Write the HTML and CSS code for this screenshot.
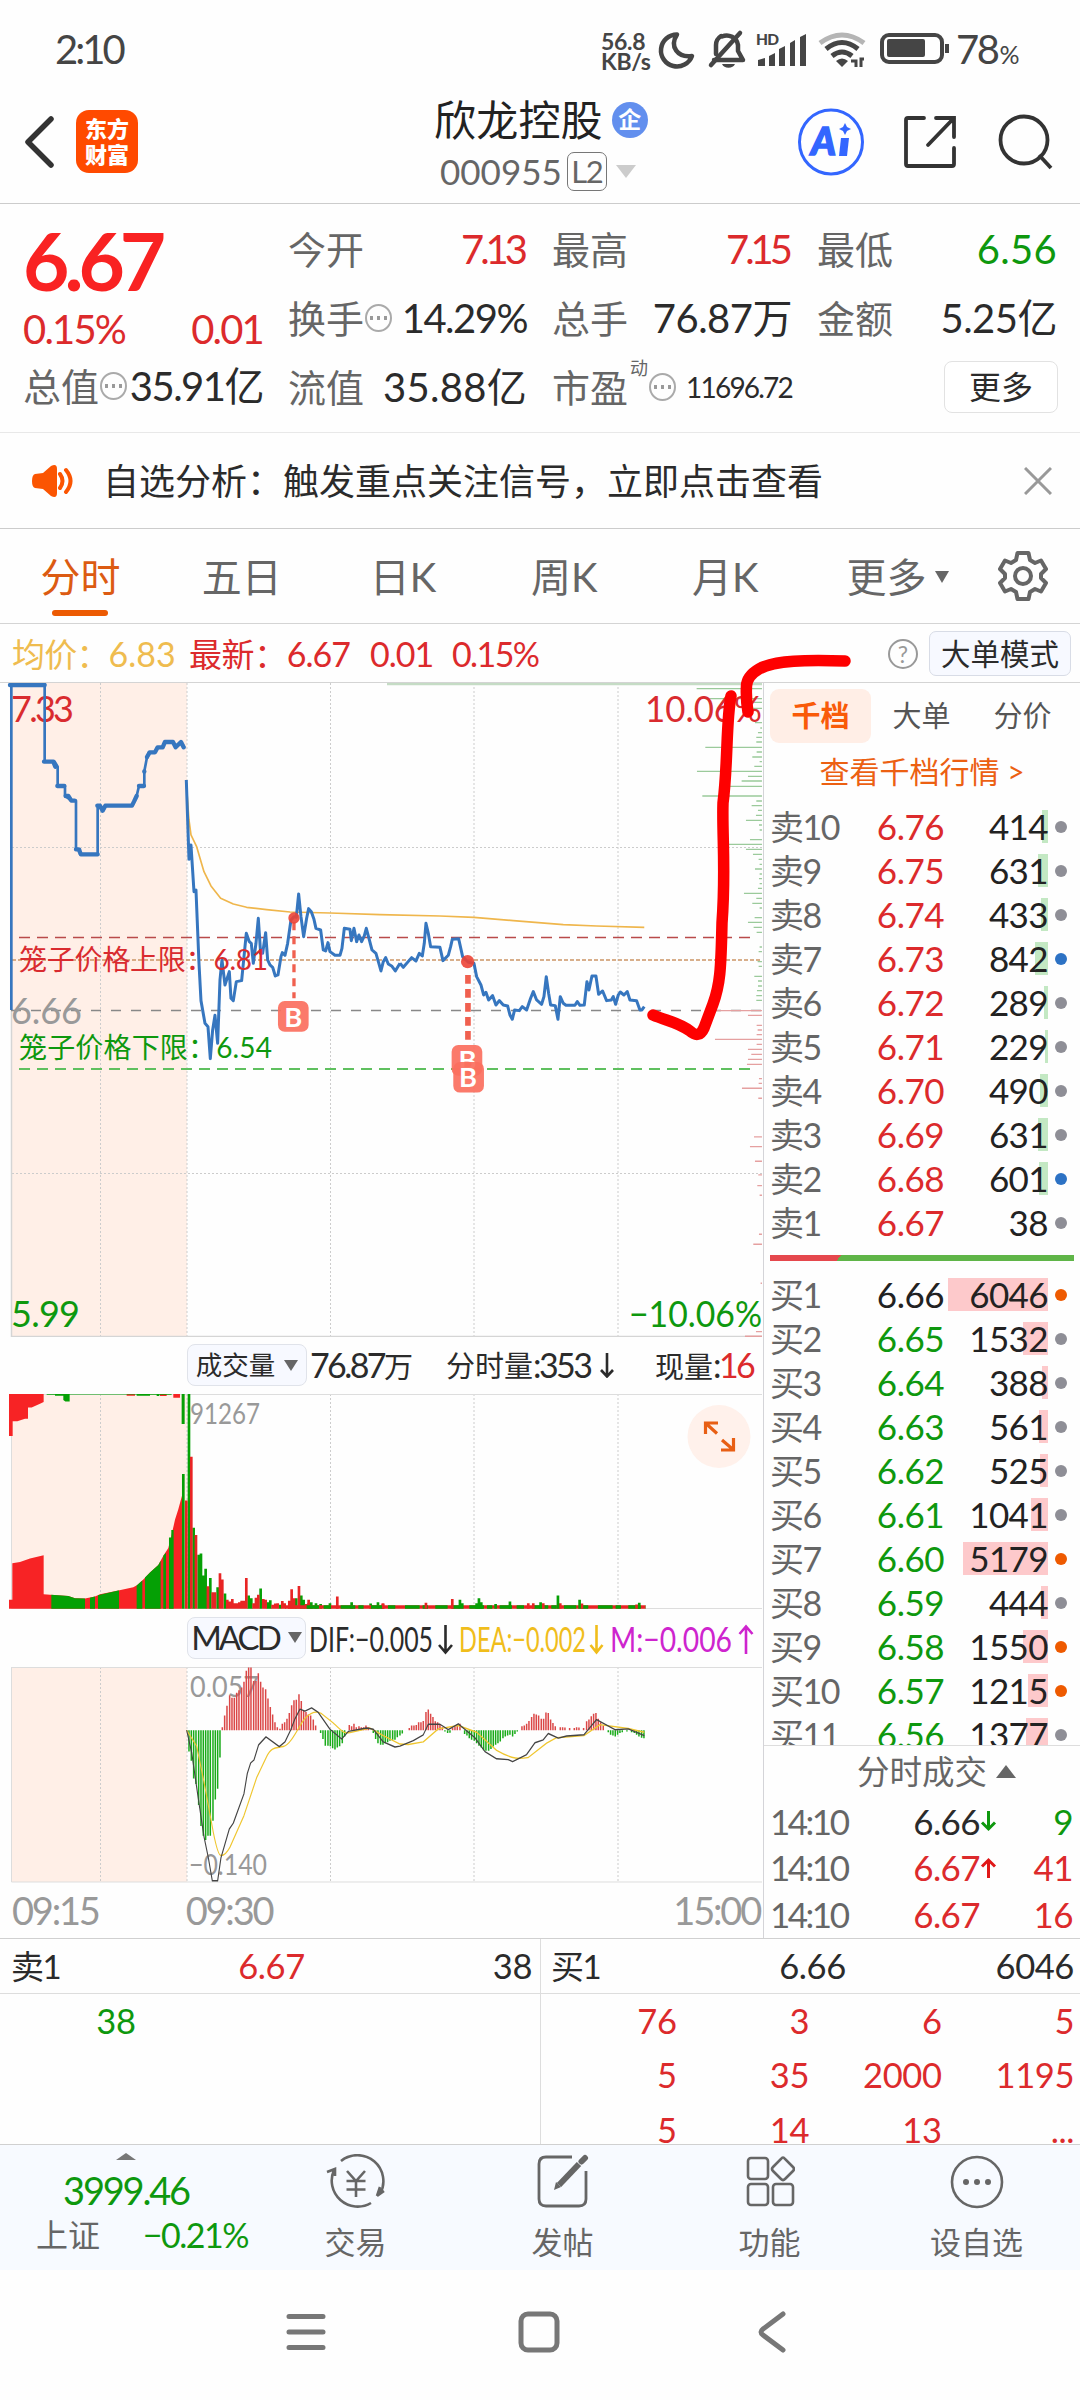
FILE: index.html
```html
<!DOCTYPE html>
<html lang="zh-CN">
<head>
<meta charset="utf-8">
<title>欣龙控股 000955</title>
<link rel="stylesheet" href="styles.css">
</head>
<body>
<div class="screen">

<header class="status">
  <span class="clock">2:10</span>
  <div class="status-right">
    <div class="speed"><span>56.8</span><span>KB/s</span></div>
    <svg class="status-icons" width="304" height="48" viewBox="652 26 304 48">
      <g fill="none" stroke="#454545" stroke-width="4.5" stroke-linecap="round" stroke-linejoin="round">
        <path d="M677 35.500A16 16 0 1 0 692 57C678 59 669 48 677 35.500Z"/>
        <path d="M714 61H743L738 52V46A11.500 11.500 0 0 0 722 37.500M716 55V46C716 42 718 39 721 37"/>
        <path d="M711 66L740 34"/>
      </g>
      <path d="M722 65H735A7 6 0 0 1 722 65Z" fill="#454545"/>
      <g fill="#454545">
        <path d="M758 61L765 59V67H758ZM769 57L775 54V67H769ZM779 50L785 47V67H779ZM790 44L795 41V67H790ZM800 38L806 35V67H800Z"/>
        <text x="756" y="46" font-size="15.500" font-weight="900" textLength="23">HD</text>
      </g>
      <g fill="none" stroke-width="5">
        <path d="M820 44Q842 28 864 44" stroke="#b5b5b5"/>
        <path d="M826 50Q842 37 858 50" stroke="#454545"/>
        <path d="M832 57Q842 49 852 57" stroke="#454545"/>
      </g>
      <path d="M836 62Q842 57 848 62L842 68Z" fill="#454545"/>
      <path d="M851 62H856V68M861 68V60H864" fill="none" stroke="#454545" stroke-width="3"/>
      <rect x="882" y="36" width="60" height="27" rx="7" fill="none" stroke="#454545" stroke-width="4"/>
      <rect x="887" y="40" width="38" height="18" rx="2" fill="#454545"/>
      <path d="M947 45V54" stroke="#454545" stroke-width="4"/>
    </svg>
    <span class="battery">78<small>%</small></span>
  </div>
</header>

<header class="topbar">
  <div class="top-left">
    <svg width="32" height="54" viewBox="0 0 32 54"><path d="M27 4L4 27L27 50" fill="none" stroke="#333" stroke-width="5.500" stroke-linecap="round" stroke-linejoin="round"/></svg>
    <div class="logo"><span>东方</span><span>财富</span></div>
  </div>
  <div class="title">
    <div class="name"><span>欣龙控股</span><i>企</i></div>
    <div class="code"><span>000955</span><b>L2</b><svg width="20" height="13"><path d="M0 0H20L10 13Z" fill="#ccc"/></svg></div>
  </div>
  <div class="top-right">
    <svg width="66" height="68" viewBox="0 0 66 68"><ellipse cx="33" cy="34" rx="31.500" ry="32" fill="none" stroke="#3366ff" stroke-width="3"/><text x="13" y="47" font-size="38" font-weight="900" font-style="italic" fill="#3366ff" stroke="#3366ff" stroke-width="1.500" textLength="26">A</text><path d="M43 30H51L49 48H41Z" fill="#3366ff"/><path d="M47 15L49 19L53 21L49 23L47 27L45 23L41 21L45 19Z" fill="#3366ff"/></svg>
    <svg width="56" height="56" viewBox="0 0 56 56" fill="none" stroke="#333" stroke-width="3.800"><path d="M22 4H6Q4 4 4 6V50Q4 52 6 52H50Q52 52 52 50V34M34 4H52V23M52 4L26 31" stroke-linecap="round"/></svg>
    <svg width="56" height="56" viewBox="0 0 56 56" fill="none" stroke="#333" stroke-width="3.800"><circle cx="27" cy="26" r="23.500"/><path d="M42 41L54 54"/></svg>
  </div>
</header>

<section class="quote">
  <div class="q1"><strong>6.67</strong>
    <div class="pair red"><span>0.15%</span><span>0.01</span></div>
    <div class="pair"><label>总值<i class="more-dot"></i></label><span class="tight">35.91亿</span></div></div>
  <div class="q2">
    <div class="pair"><label>今开</label><span class="red kern">7.13</span></div>
    <div class="pair"><label>换手<i class="more-dot"></i></label><span class="tight">14.29%</span></div>
    <div class="pair"><label>流值</label><span class="wide">35.88亿</span></div></div>
  <div class="q2">
    <div class="pair"><label>最高</label><span class="red kern">7.15</span></div>
    <div class="pair"><label>总手</label><span>76.87万</span></div>
    <div class="pair"><label>市盈<sup>动</sup><i class="more-dot"></i></label><span class="small">11696.72</span></div></div>
  <div class="q2">
    <div class="pair"><label>最低</label><span class="green wide">6.56</span></div>
    <div class="pair"><label>金额</label><span>5.25亿</span></div>
    <div class="pair end"><button>更多</button></div></div>
</section>

<section class="notice">
  <svg width="42" height="36" viewBox="0 0 42 36"><path d="M3 11Q0 12 0 18Q0 24 3 25L11 26L19 33Q25 36 25 30V6Q25 0 19 3L11 10Z" fill="#fb5502"/><path d="M28 11Q33 18 28 25M34 7Q43 18 34 29" fill="none" stroke="#fb5502" stroke-width="4" stroke-linecap="round"/></svg>
  <p>自选分析：触发重点关注信号，立即点击查看</p>
  <svg width="28" height="28" viewBox="0 0 28 28"><path d="M1 1L27 27M27 1L1 27" stroke="#999" stroke-width="3"/></svg>
</section>

<nav class="tabs">
  <a class="on">分时</a><a>五日</a><a>日K</a><a>周K</a><a>月K</a>
  <a class="more">更多<svg width="14" height="12"><path d="M0 0H14L7 12Z" fill="#666"/></svg></a>
  <svg width="50" height="52" viewBox="0 0 50 52" fill="none" stroke="#666" stroke-width="4" stroke-linejoin="round"><path d="M19.500 3H30.500L32 10L37 13L43 10.500L48 19L43 24V28L48 33L43 41.500L37 39L32 42L30.500 49H19.500L18 42L13 39L7 41.500L2 33L7 28V24L2 19L7 10.500L13 13L18 10Z"/><circle cx="25" cy="26" r="8"/></svg>
</nav>

<section class="info">
  <span class="avg">均价：<b>6.83</b></span><span class="last">最新：<b>6.67</b></span><b class="chg">0.01</b><b class="pct">0.15%</b>
  <i class="help">?</i><button>大单模式</button>
</section>

<main class="main">
<section class="charts">
  <svg class="price" width="764" height="654" viewBox="0 0 764 654">
    <rect x="11" y="0" width="176" height="653" fill="#ffefe7"/>
    <g stroke="#ccc" stroke-dasharray="2 2" fill="none"><path d="M100.500 0V653M187 0V653M330.500 0V653M474 0V653M618 0V653M12 164.500H762M12 490.500H762"/></g>
    <path d="M11.500 0V653.500H762" fill="none" stroke="#d5d5d5" stroke-width="1.500"/>
    <path d="M19 254.500H750" stroke="#b94a4a" stroke-width="1.500" stroke-dasharray="11 7"/>
    <path d="M12 277H762" stroke="#cc9566" stroke-width="1.500" stroke-dasharray="4 2"/>
    <path d="M11 327.500H762" stroke="#888" stroke-width="1.500" stroke-dasharray="10 10"/>
    <path d="M19 386H750" stroke="#5fc05f" stroke-width="1.800" stroke-dasharray="11 7"/>
    <path d="M387 .8H762" stroke="#c5dcc5" stroke-width="3"/>
    <g transform="translate(380 -13) scale(.3333)" fill="none" stroke-width="4">
      <path stroke="#9bca9b" d="M950 56H1146M975 86H1146M1090 97H1146M1095 115H1146M1125 158H1146M1141 174H1146M1134 188H1146M1129 202H1146M1129 216H1146M976 232H1146M1130 246H1146M1117 261H1146M1139 275H1146M1123 289H1146M951 304H1146M1104 319H1146M1085 333H1146M1045 349H1146M967 378H1146M1129 393H1146M1115 407H1146M1134 421H1146M1128 436H1146M1098 451H1146M1137 465H1146M1139 480H1146M1110 509H1146M1040 523H1146M1098 538H1146M1119 553H1146M1136 568H1146M1139 583H1146M1125 597H1146M1139 612H1146M1137 626H1146M1139 641H1146M1134 655H1146M1092 670H1146M1129 685H1146M1117 700H1146M1139 714H1146M1124 743H1146M1104 757H1146M1121 772H1146M1130 787H1146M1139 831H1146M1136 845H1146M1133 875H1146M1136 889H1146M1123 919H1146M1134 933H1146M1134 948H1146M1131 962H1146M1129 977H1146M1129 991H1146"/>
      <path stroke="#e5a0a0" d="M1010 1022H1146M1104 1036H1146M1130 1066H1146M1133 1080H1146M1130 1094H1146M1005 1108H1146M1130 1123H1146M1104 1138H1146M1114 1153H1146M1104 1168H1146M1101 1183H1146M1137 1226H1146M1136 1240H1146M1086 1255H1146M1135 1285H1146M1122 1401H1146M1110 1430H1146M1125 1474H1146M1135 1515H1146M1132 1547H1146M1139 1576H1146M1137 1693H1146M1120 1723H1146M1142 1840H1146M1128 1985H1146M1095 1999H1146"/>
    </g>
    <g font-size="36">
      <text x="11" y="38.500" fill="#d92b2f" textLength="63">7.33</text><text x="645" y="38.500" fill="#d92b2f" textLength="117" lengthAdjust="spacingAndGlyphs">10.06%</text>
      <text x="11" y="340.500" fill="#999" textLength="71">6.66</text>
      <text x="11" y="644" fill="#0e980e" textLength="69">5.99</text><text x="629" y="644" fill="#0e980e" textLength="133" lengthAdjust="spacingAndGlyphs">−10.06%</text>
    </g>
    <g transform="translate(0 -13) scale(.3333)" fill="none" stroke-linejoin="round">
      <g stroke="#3676bf">
        <path stroke-width="8" d="M34 1020V44H134V275H164L173 290V348H195V378L215 392H228V538H240V553H293V407L308 420L318 407H396L410 378L417 348H433V304L441 262L447 247H465L472 232H488L494 216H520L527 232L543 216L553 232"/>
        <path stroke-width="13" stroke-linecap="round" d="M30 45H134M132 275H160L166 290M172 348H193M197 378H205L214 392H224M228 538H236L243 553H293M292 407H300L308 422L316 407H396L402 395L410 378M417 348H432M433 304V305M441 262V261L449 247H465L473 232H488L495 216H519L527 232L543 216L551 232"/>
      </g>
      <path stroke="#efb64c" stroke-width="5" d="M559 340L567 450 573 495 590 530 612 605 633 648 662 685 700 702 740 712 800 719 870 726 990 729 1140 734 1320 738 1422 742 1540 752 1690 764 1790 768 1933 772"/>
      <path stroke="#3676bf" stroke-width="9" d="M559 330L567 568 573 525 582 665 588 660 597 880 603 992 615 1060 624 1070 631 1166 638 1080 645 1036 653 1120 660 930 666 870 675 945 688 905 693 985 700 992 709 935 725 932 733 850 739 790 748 815 754 820 760 880 768 820 775 745 782 850 788 850 797 788 803 870 810 885 818 892 826 918 834 915 843 860 847 848 855 856 863 820 873 750 882 740 889 742 896 672 903 740 911 800 920 745 926 716 934 725 942 748 948 775 962 780 970 840 977 843 984 818 990 845 1005 856 1020 856 1026 835 1033 775 1050 778 1054 812 1062 775 1070 815 1077 795 1085 815 1093 798 1099 775 1107 805 1116 840 1128 850 1136 878 1143 903 1150 875 1157 863 1165 882 1175 888 1186 903 1200 880"/>
      <path transform="translate(1140 0)" stroke="#3676bf" stroke-width="9" d="M60 880L70 892 95 863 108 873 118 850 127 858 133 820 138 760 145 790 152 830 180 832 189 872 205 856 212 830 217 808 236 806 248 860 265 877 282 880 290 920 303 945 311 975 318 967 326 990 338 977 348 1005 358 992 370 1005 383 1008 390 1035 397 1048 404 1020 418 1022 427 1010 440 1020 452 985 460 965 470 990 485 1003 492 980 499 920 506 970 512 1005 526 1007 534 1048 541 980 550 1000 558 1006 585 1006 592 995 600 1006 613 1005 621 935 627 960 636 918 648 918 656 973 668 963 680 992 694 990 700 980 707 1003 715 975 721 966 732 975 742 965 750 990 770 992 780 1020 786 1020 793 1010"/>
      <g stroke="#f0604f"><path d="M882 757V985" stroke-width="10" stroke-dasharray="24 18"/><path d="M1404 915V1125" stroke-width="17" stroke-dasharray="26 16"/></g>
      <g fill="#ec4436" fill-opacity=".9"><circle cx="882" cy="744" r="17"/><circle cx="1403" cy="875" r="20"/></g>
      <g fill="#fb6f5e" fill-opacity=".92"><rect x="834" y="993" width="92" height="92" rx="20"/><rect x="1355" y="1125" width="92" height="92" rx="20"/></g>
      <text x="1403" y="1200" class="mark">B</text>
      <rect x="1360" y="1176" width="92" height="92" rx="20" fill="#fb6f5e" fill-opacity=".92"/>
      <text x="880" y="1070" class="mark">B</text><text x="1404" y="1252" class="mark">B</text>
    </g>
    <text x="19" y="287" font-size="28" fill="#d92b2f" textLength="249">笼子价格上限：6.81</text>
    <text x="19" y="375" font-size="28" fill="#0e980e" textLength="253">笼子价格下限：6.54</text>
  </svg>

  <div class="ind vol-head">
    <button>成交量<svg width="14" height="11"><path d="M0 0H14L7 11Z" fill="#666"/></svg></button>
    <span class="n1"><b>76.87</b>万</span><span class="n2">分时量<b>:353</b><svg width="14" height="26" viewBox="0 0 14 26"><path d="M7 1V24M1 18L7 24.500L13 18" fill="none" stroke="#2b2b2b" stroke-width="2.600"/></svg></span><span class="n3">现量<b>:<em>16</em></b></span>
  </div>
  <svg class="volume" width="764" height="215" viewBox="0 0 764 215">
    <rect x="11" y="0" width="176" height="214" fill="#ffefe7"/>
    <path d="M100.500 0V214M187 0V214M330.500 0V214M474 0V214M618 0V214" stroke="#ccc" stroke-dasharray="2 2"/>
    <path d="M11 .5H762M11.500 0V214.500H762" fill="none" stroke="#ddd"/>
    <g transform="scale(.3333 .4209) translate(0 -271)" fill="#f72325">
      <path d="M27 271V371H38V336H52L75 330H84V303H95L120 294L131 290V271ZM380 271H405V275H380ZM480 271H500V276H480ZM520 271H540V280H520Z"/>
      <path fill="#05a005" d="M140 271V273H165V275H190V285L196 289H209V272H410V275H450V273H470V276H478V273H515V271ZM545 271H554V342H545Z"/>
      <path d="M27 781V760H37V673L60 670L90 662L131 654V747L150 748L205 751 225 756 255 757 285 752 300 747 355 738 400 730 412 725 430 712 450 695 475 677 490 655 505 637 515 605 525 570 535 545 546 513V781Z"/>
      <path fill="#05a005" d="M154 781V748L205 751 225 756 255 757V781ZM270 781V755L285 752V781ZM294 781V749L355 738H357V781ZM410 781V726L427 714V781ZM435 781V707L450 695 475 677 482 667V781ZM490 781V655L498 648V781ZM507 781V612H514V594H521V781Z"/>
    </g>
    <g transform="scale(.3333 .4209) translate(0 -271)" fill="none" stroke-width="8">
      <path stroke="#05a005" d="M550 781V461M567 781V271M581 781V589M596 781V653M603 781V650M610 781V702M617 781V686M631 781V708M653 781V730M675 781V745M746 781V750M754 781V756M782 781V733M804 781V766M811 781V761M840 781V772M889 781V756M904 781V750M911 781V760M926 781V768M934 781V766M948 781V768M962 781V770M990 781V768M1055 781V766M1112 781V769M1134 781V766"/>
      <path stroke="#e82424" d="M559 781V524M574 781V420M588 781V606M624 781V728M638 781V742M645 781V742M660 781V697M667 781V712M682 781V760M689 781V764M697 781V758M704 781V768M711 781V768M718 781V766M725 781V762M732 781V762M739 781V708M761 781V768M768 781V755M775 781V748M790 781V758M797 781V760M818 781V772M826 781V769M833 781V768M847 781V763M854 781V768M868 781V762M875 781V735M882 781V756M897 781V727M918 781V770M926 781V760M1012 781V752M1148 781V769"/>
      <path stroke="#e82424" d="M855 777H1937"/><path stroke="#05a005" d="M920 777H1937" stroke-dasharray="37 14 22 29 44 9 16 22"/>
      <g transform="translate(1140 0)"><path stroke="#e82424" d="M10 781V769M138 781V767M217 781V758M445 781V768M460 781V768M490 781V768M541 781V768M606 781V769M770 781V771"/><path stroke="#05a005" d="M240 781V760M247 781V768M290 781V768M297 781V756M304 781V766M347 781V770M390 781V764M482 781V766M534 781V750M599 781V760M778 781V767"/></g>
    </g>
    <text x="190" y="30" font-size="28" fill="#999" textLength="70" lengthAdjust="spacingAndGlyphs">91267</text>
    <circle cx="719" cy="42.500" r="31.500" fill="#fff1eb"/>
    <path d="M705.500 40V29H718M706 29.500L717 39.500M733.500 44V56H721M733 55.500L722 46" fill="none" stroke="#e85f14" stroke-width="3.200"/>
  </svg>

  <div class="ind macd-head">
    <button><b>MACD</b><svg width="14" height="11"><path d="M0 0H14L7 11Z" fill="#666"/></svg></button>
    <svg width="457" height="56" viewBox="307 0 457 56" font-size="35">
      <text x="310" y="42" fill="#2b2b2b" textLength="124" lengthAdjust="spacingAndGlyphs">DIF:−0.005</text>
      <text x="460" y="42" fill="#f0bd1b" textLength="127" lengthAdjust="spacingAndGlyphs">DEA:−0.002</text>
      <text x="611" y="42" fill="#ce24ce" textLength="122" lengthAdjust="spacingAndGlyphs">M:−0.006</text>
      <g fill="none" stroke-width="2.600"><path stroke="#2b2b2b" d="M446.500 15V42M440 35L446.500 42.500L453 35"/><path stroke="#f0bd1b" d="M597.500 15V42M591.500 35L597.500 42.500L603.500 35"/><path stroke="#ce24ce" d="M747 44V17M740.500 24L747 16.500L753.500 24"/></g>
    </svg>
  </div>
  <svg class="macd" width="764" height="216" viewBox="0 0 764 216">
    <rect x="11" y="0" width="176" height="215" fill="#ffefe7"/>
    <path d="M100.500 0V215M187 0V215M330.500 0V215M474 0V215M618 0V215" stroke="#ccc" stroke-dasharray="2 2"/>
    <path d="M11 .5H762M11.500 0V215H762" fill="none" stroke="#ddd"/>
    <text x="190" y="30" font-size="28" fill="#999" textLength="69" lengthAdjust="spacingAndGlyphs">0.057</text>
    <text x="189" y="208" font-size="28" fill="#999" textLength="78" lengthAdjust="spacingAndGlyphs">−0.140</text>
    <g transform="scale(.3333 .4209) translate(0 -917)" fill="none" stroke-width="4.500">
      <path stroke="#19ab19" d="M567 1067V1118M574 1067V1140M581 1067V1182M588 1067V1195M596 1067V1245M603 1067V1295M610 1067V1318M617 1067V1328M624 1067V1318M631 1067V1318M639 1067V1282M646 1067V1232M653 1067V1206M660 1067V1132M962 1067V1074M969 1067V1088M976 1067V1104M984 1067V1104M991 1067V1105M998 1067V1110M1005 1067V1113M1012 1067V1108M1019 1067V1105M1027 1067V1098M1034 1067V1082M1120 1067V1074M1127 1067V1088M1134 1067V1098M1142 1067V1102M1149 1067V1102M1156 1067V1098M1163 1067V1096M1170 1067V1092M1178 1067V1090M1185 1067V1090M1192 1067V1084M1200 1067V1080M1207 1067V1075"/>
      <path stroke="#db4747" d="M667 1067V1060M674 1067V1032M681 1067V1009M689 1067V984M696 1067V990M703 1067V990M710 1067V978M717 1067V972M725 1067V966M732 1067V952M739 1067V926M746 1067V918M753 1067V918M761 1067V950M768 1067V950M775 1067V932M782 1067V952M789 1067V966M797 1067V970M804 1067V992M811 1067V1012M818 1067V1030M825 1067V1048M832 1067V1060M840 1067V1064M847 1067V1052M854 1067V1048M861 1067V1040M868 1067V1026M875 1067V1008M882 1067V996M889 1067V995M897 1067V982M904 1067V998M911 1067V1020M918 1067V1024M925 1067V1030M932 1067V1032M940 1067V1042M947 1067V1056M1048 1067V1055M1055 1067V1058M1062 1067V1052M1069 1067V1060M1077 1067V1058M1084 1067V1060M1091 1067V1060M1098 1067V1056M1105 1067V1060"/>
      <g transform="translate(1140 0)">
        <path stroke="#19ab19" d="M195 1067V1070M203 1067V1074M210 1067V1073M254 1067V1076M261 1067V1080M268 1067V1086M275 1067V1090M283 1067V1092M290 1067V1098M297 1067V1104M304 1067V1108M311 1067V1115M318 1067V1116M326 1067V1116M333 1067V1112M340 1067V1106M347 1067V1102M354 1067V1098M361 1067V1094M369 1067V1086M376 1067V1082M383 1067V1080M390 1067V1078M398 1067V1082M405 1067V1076M412 1067V1070M685 1067V1072M692 1067V1078M699 1067V1080M706 1067V1082M713 1067V1078M720 1067V1074M727 1067V1072M741 1067V1070M755 1067V1072M763 1067V1074M770 1067V1078M777 1067V1082M785 1067V1085M792 1067V1086"/>
        <path stroke="#db4747" d="M88 1067V1062M95 1067V1056M102 1067V1056M109 1067V1055M116 1067V1048M123 1067V1048M130 1067V1045M138 1067V1024M145 1067V1018M152 1067V1028M159 1067V1036M166 1067V1046M173 1067V1048M180 1067V1054M187 1067V1060M218 1067V1062M225 1067V1058M232 1067V1053M240 1067V1052M426 1067V1058M433 1067V1056M440 1067V1052M447 1067V1045M455 1067V1036M462 1067V1028M469 1067V1030M476 1067V1032M484 1067V1040M491 1067V1040M498 1067V1025M505 1067V1026M512 1067V1042M519 1067V1050M526 1067V1058M541 1067V1060M548 1067V1060M555 1067V1061M569 1067V1062M583 1067V1062M590 1067V1060M597 1067V1061M611 1067V1062M620 1067V1046M627 1067V1042M634 1067V1034M641 1067V1028M648 1067V1026M655 1067V1040M662 1067V1048M670 1067V1056"/>
      </g>
      <g stroke-width="3.300" stroke-linejoin="round">
        <path stroke="#efc62f" d="M560 1067L590 1105 612 1190 640 1310C650 1350 657 1365 663 1365S680 1360 690 1345L732 1270 770 1180 800 1130C815 1105 830 1110 850 1106S890 1070 905 1050 945 1018 965 1028L1000 1050C1030 1073 1030 1074 1050 1073L1110 1062 1150 1080 1200 1100 1225 1101 1270 1095 1315 1064 1375 1056 1430 1072 1490 1115C1540 1138 1560 1135 1585 1132L1640 1098 1670 1085 1752 1080 1800 1054 1885 1063 1933 1072"/>
        <path stroke="#444" d="M560 1067L575 1120 595 1230 612 1320 625 1370 637 1425 653 1425 663 1370 688 1302 700 1288 732 1218 742 1170 752 1145 762 1138 776 1102 798 1083 838 1106 855 1095 873 1065 885 1040 900 1017 915 1022 935 1014 955 1025 990 1065 1025 1088 1045 1070 1100 1062 1120 1065 1150 1095 1185 1107 1200 1105 1240 1092 1270 1078 1285 1053 1320 1053 1345 1066 1375 1052 1425 1085 1455 1118 1490 1135 1525 1137 1538 1142 1580 1125 1605 1097 1630 1090 1645 1075 1675 1086 1700 1081 1752 1078 1790 1042 1845 1066 1885 1064 1933 1080"/>
      </g>
    </g>
  </svg>
  <div class="axis"><span>09:15</span><span>09:30</span><span>15:00</span></div>
</section>

<aside class="book">
  <div class="book-tabs"><a class="on">千档</a><a>大单</a><a>分价</a></div>
  <a class="book-link">查看千档行情 &gt;</a>
  <div class="sell">
    <div class="row"><span>卖10</span><b>6.76</b><u><i style="width:6px"></i>414</u><s></s></div>
    <div class="row"><span>卖9</span><b>6.75</b><u><i style="width:10px"></i>631</u><s></s></div>
    <div class="row"><span>卖8</span><b>6.74</b><u><i style="width:7px"></i>433</u><s></s></div>
    <div class="row"><span>卖7</span><b>6.73</b><u><i style="width:13px"></i>842</u><s class="blue"></s></div>
    <div class="row"><span>卖6</span><b>6.72</b><u><i style="width:4px"></i>289</u><s></s></div>
    <div class="row"><span>卖5</span><b>6.71</b><u><i style="width:3px"></i>229</u><s></s></div>
    <div class="row"><span>卖4</span><b>6.70</b><u><i style="width:8px"></i>490</u><s></s></div>
    <div class="row"><span>卖3</span><b>6.69</b><u><i style="width:10px"></i>631</u><s></s></div>
    <div class="row"><span>卖2</span><b>6.68</b><u><i style="width:9px"></i>601</u><s class="blue"></s></div>
    <div class="row"><span>卖1</span><b>6.67</b><u>38</u><s></s></div>
  </div>
  <div class="ratio"></div>
  <div class="buy">
    <div class="row"><span>买1</span><b class="flat">6.66</b><u><i style="width:100px"></i>6046</u><s class="hot"></s></div>
    <div class="row"><span>买2</span><b>6.65</b><u><i style="width:25px"></i>1532</u><s></s></div>
    <div class="row"><span>买3</span><b>6.64</b><u><i style="width:6px"></i>388</u><s></s></div>
    <div class="row"><span>买4</span><b>6.63</b><u><i style="width:9px"></i>561</u><s></s></div>
    <div class="row"><span>买5</span><b>6.62</b><u><i style="width:8px"></i>525</u><s></s></div>
    <div class="row"><span>买6</span><b>6.61</b><u><i style="width:17px"></i>1041</u><s></s></div>
    <div class="row"><span>买7</span><b>6.60</b><u><i style="width:85px"></i>5179</u><s class="hot"></s></div>
    <div class="row"><span>买8</span><b>6.59</b><u><i style="width:7px"></i>444</u><s></s></div>
    <div class="row"><span>买9</span><b>6.58</b><u><i style="width:25px"></i>1550</u><s class="hot"></s></div>
    <div class="row"><span>买10</span><b>6.57</b><u><i style="width:20px"></i>1215</u><s class="hot"></s></div>
    <div class="row"><span>买11</span><b>6.56</b><u><i style="width:22px"></i>1377</u><s></s></div>
  </div>
  <div class="deal-head">分时成交<svg width="20" height="13"><path d="M0 13H20L10 0Z" fill="#666"/></svg></div>
  <div class="deal"><span>14:10</span><b>6.66</b><svg width="17" height="22" viewBox="0 0 17 22"><path d="M8.500 1V19M2 12.500L8.500 19L15 12.500" fill="none" stroke="#0e980e" stroke-width="3"/></svg><em class="green">9</em></div>
  <div class="deal"><span>14:10</span><b class="red">6.67</b><svg width="17" height="22" viewBox="0 0 17 22"><path d="M8.500 21V3M2 9.500L8.500 3L15 9.500" fill="none" stroke="#e01818" stroke-width="3"/></svg><em class="red">41</em></div>
  <div class="deal"><span>14:10</span><b class="red">6.67</b><svg width="17" height="22"></svg><em class="red">16</em></div>
</aside>

<svg class="scribble" width="216" height="410" viewBox="0 0 216 410"><g fill="none" stroke="#fe0000" stroke-width="11.500" stroke-linecap="round" stroke-linejoin="round"><path d="M203 21C165 20 133 20 117 29Q105 36 104.500 46C104 55 105 66 106 72"/><path d="M89 56C84 80 86 125 81 163C80 195 84 230 80 283C79 330 78 345 71 364L62 388Q57 399 48 391C36 382 25 381 11 375"/></g></svg>
</main>

<section class="queues">
  <div class="queue"><header><span>卖1</span><b class="red">6.67</b><em>38</em></header>
    <div class="cells green"><span>38</span></div></div>
  <div class="queue"><header><span>买1</span><b>6.66</b><em>6046</em></header>
    <div class="cells red"><span>76</span><span>3</span><span>6</span><span>5</span><span>5</span><span>35</span><span>2000</span><span>1195</span><span>5</span><span>14</span><span>13</span><span>...</span></div></div>
</section>

<footer class="actions">
  <div class="index"><svg width="20" height="7"><path d="M0 7H20L10 0Z" fill="#777"/></svg><strong>3999.46</strong><div><span>上证</span><b>−0.21%</b></div></div>
  <a><svg width="60" height="56" viewBox="0 0 60 56" fill="none" stroke="#666" stroke-width="2.600"><path d="M15 7A26 26 0 0 1 54 40M45 49A26 26 0 0 1 8 16M1 18L9 15V22M51 42L58 37M51 42L54 33"/><path d="M21 17L30 27L39 17M30 26V43M20.500 27H39.500M20.500 35.500H39.500"/></svg>交易</a>
  <a><svg width="54" height="56" viewBox="0 0 54 56" fill="none" stroke="#666" stroke-width="2.800"><path d="M36 3H10Q3 3 3 10V45Q3 52 10 52H43Q50 52 50 45V17"/><path d="M23 31L43 10" stroke-width="6"/><path d="M45.500 7.500L49 4" stroke-width="6" stroke-linecap="round"/><path d="M18 36L20 28L25 33Z" fill="#666" stroke="none"/></svg>发帖</a>
  <a><svg width="50" height="56" viewBox="0 0 50 56" fill="none" stroke="#666" stroke-width="2.600"><rect x="3" y="4" width="20" height="21" rx="3"/><rect x="3" y="30" width="20" height="21" rx="3"/><rect x="28" y="30" width="20" height="21" rx="3"/><path d="M36 5Q38 2 40 5L48 13Q50 15 48 17L40 25Q38 27 36 25L28 17Q26 15 28 13Z"/></svg>功能</a>
  <a><svg width="54" height="56" viewBox="0 0 54 56"><circle cx="27" cy="28" r="25" fill="none" stroke="#666" stroke-width="2.600"/><g fill="#666"><circle cx="16" cy="28" r="3"/><circle cx="27" cy="28" r="3"/><circle cx="38" cy="28" r="3"/></g></svg>设自选</a>
</footer>

<nav class="system">
  <svg width="40" height="44" viewBox="0 0 40 44"><path d="M3 6.500H37M3 22H37M3 37.500H37" stroke="#777" stroke-width="5" stroke-linecap="round"/></svg>
  <svg width="44" height="44" viewBox="0 0 44 44"><rect x="4" y="4" width="36" height="36" rx="7" fill="none" stroke="#777" stroke-width="5"/></svg>
  <svg width="30" height="44" viewBox="0 0 30 44"><path d="M26 4L6 19Q2 22 6 25L26 40" fill="none" stroke="#777" stroke-width="5" stroke-linecap="round"/></svg>
</nav>
</div>
</body>
</html>
```
FILE: styles.css
```css
* { box-sizing: border-box; }
body { margin: 0; background: #fefefe; font-family: Lato, "Noto Sans CJK SC", sans-serif; color: #2b2b2b; line-height: 1; }
b, em, i, u, s { font-weight: 400; font-style: normal; text-decoration: none; }
svg { display: block; flex: none; }
button { font: inherit; color: inherit; padding: 0; margin: 0; }
.screen { width: 1080px; height: 2400px; overflow: hidden; display: flex; flex-direction: column; background: #fefefe; white-space: nowrap; }
.red { color: #dc2a2c; }
.green { color: #0e980e; }

.status { height: 98px; padding: 0 61px 0 55px; display: flex; justify-content: space-between; align-items: center; color: #454545; }
.clock { font-size: 40px; letter-spacing: -3px; }
.status-right { display: flex; align-items: center; }
.speed { display: flex; flex-direction: column; font-weight: 700; font-size: 23px; line-height: 20px; width: 51px; margin-top: 6px; letter-spacing: -.3px; }
.speed span { height: 20px; line-height: 18px; }
.battery { font-size: 40px; letter-spacing: -2.500px; width: 63px; }
.battery small { font-size: 25px; margin-left: 2px; }

.topbar { height: 106px; border-bottom: 1px solid #ccc; padding: 0 27px 0 24px; display: grid; grid-template-columns: 300px 1fr 300px; }
.top-left { display: flex; align-items: center; gap: 20px; height: 88px; }
.logo { width: 62px; height: 63px; border-radius: 13px; background: #ff4a00; color: #fff; display: flex; flex-direction: column; align-items: center; justify-content: center; font-size: 22px; line-height: 26px; font-weight: 900; }
.title { padding-left: 110px; }
.name { display: flex; align-items: center; font-size: 42px; height: 44px; gap: 9px; color: #222; letter-spacing: .2px; }
.name i { width: 36px; height: 36px; border-radius: 50%; background: #628fee; color: #fff; font-size: 23px; line-height: 35px; text-align: center; font-weight: 700; }
.code { display: flex; align-items: center; height: 38px; margin-top: 11px; margin-left: 6px; font-size: 35px; color: #666; }
.code b { width: 40px; height: 39px; border: 1.500px solid #777; border-radius: 7px; font-size: 31px; line-height: 36px; text-align: center; letter-spacing: -1.500px; margin: 0 9px 0 5px; }
.top-right { display: flex; align-items: center; justify-content: flex-end; height: 88px; gap: 37px; }
.top-right svg:first-child { margin-right: 1px; }
.top-right svg:last-child { margin-left: 2px; }

.quote { height: 230px; border-bottom: 1px solid #e8e8e8; padding: 11px 22px 0 23px; display: grid; grid-template-columns: 240px 239px 240px 240px; column-gap: 25px; font-size: 40px; }
.quote strong { display: block; height: 91px; line-height: 91px; font-size: 80px; letter-spacing: -5px; color: #f92222; font-weight: 700; }
.q1 .pair.red { height: 46px; }
.q1 .pair.red span { letter-spacing: -1.800px; }
.pair { height: 69px; display: flex; justify-content: space-between; align-items: center; }
.pair span { letter-spacing: -.5px; }
.pair .tight { letter-spacing: -1.500px; }
.pair .wide { letter-spacing: .3px; }
.pair .kern { letter-spacing: -4px; margin-right: 3px; }
.pair .small { font-size: 28px; letter-spacing: -1.800px; }
.pair label { font-size: 38px; color: #666; display: flex; align-items: center; }
.more-dot { width: 27px; height: 28px; border: 2px solid #aaa; border-radius: 50%; margin-left: 1px; background: radial-gradient(circle 2px, #999 90%, transparent) 0 50% / 7px 100% repeat-x content-box; padding: 0 1px; }
.quote sup { font-size: 18px; align-self: flex-start; margin-top: -9px; margin-left: 2px; }
.pair.end { justify-content: flex-end; }
.quote button { width: 114px; height: 52px; border: 1.500px solid #e2e2e2; border-radius: 8px; background: #fff; font-size: 32px; margin-right: -1px; }

.notice { height: 96px; border-bottom: 1px solid #ccc; display: flex; align-items: center; padding: 0 28px 0 32px; font-size: 36px; }
.notice p { flex: 1; margin: 1px 0 0 29px; }

.tabs { height: 95px; border-bottom: 1px solid #d4d4d4; display: flex; align-items: center; font-size: 40px; color: #666; padding-right: 32px; }
.tabs a { width: 161.200px; height: 94px; display: flex; align-items: center; justify-content: center; position: relative; padding-top: 2px; }
.tabs .on { color: #dc5b12; }
.tabs .on::after { content: ""; position: absolute; left: 52px; bottom: 7px; width: 56px; height: 6px; border-radius: 3px; background: #ec5a02; }
.tabs .more { flex: 1; gap: 9px; margin-right: 8px; }

.info { height: 59px; border-bottom: 1px solid #d4d4d4; display: flex; align-items: center; padding: 2px 9px 0 12px; font-size: 33px; color: #dc2a2c; }
.info b { font-size: 34px; letter-spacing: -1px; }
.info .avg { width: 177px; color: #efbc4f; letter-spacing: -.8px; }
.info .avg b { letter-spacing: 0; }
.info .last { width: 181px; letter-spacing: -.4px; }
.info .chg { width: 82px; }
.info .pct { flex: 1; letter-spacing: -1.600px; }
.help { width: 30px; height: 30px; border: 2px solid #999; border-radius: 50%; font-size: 23px; line-height: 26px; text-align: center; color: #999; margin-right: 11px; }
.info button { width: 142px; height: 45px; border: 1.500px solid #d8dce6; border-radius: 7px; background: #f7f9ff; color: #2b2b2b; font-size: 29.500px; }

.main { height: 1256px; display: flex; border-bottom: 1px solid #d0d0d0; position: relative; }
.charts { width: 764px; border-right: 1px solid #d4d4d8; }
.mark { fill: #fff; font-size: 82px; font-weight: 700; text-anchor: middle; }
.ind { height: 57px; display: flex; align-items: center; padding-left: 187px; font-size: 29px; }
.ind button { width: 120px; height: 42px; border: 1px solid #e0e3ea; border-radius: 8px; background: #f7f9ff; font-size: 26.500px; display: flex; align-items: center; justify-content: center; gap: 9px; }
.vol-head b { font-size: 34px; letter-spacing: -2.600px; }
.n1 { width: 137px; padding-left: 3px; }
.n2 { width: 211px; padding-left: 2px; display: flex; align-items: center; }
.n2 svg { margin-left: 10px; }
.n3 em { color: #dc2a2c; }
.macd-head { height: 58px; }
.macd-head button b { font-size: 33px; letter-spacing: -3px; }
.axis { height: 56px; display: flex; align-items: center; color: #999; font-size: 38px; padding: 0 3px 2px 12px; letter-spacing: -2.200px; }
.axis span:nth-child(2) { margin-left: 87px; flex: 1; }

.book { width: 316px; display: flex; flex-direction: column; }
.book-tabs { display: flex; height: 54px; margin: 6px 0 0 6px; font-size: 29px; color: #555; }
.book-tabs a { width: 101px; height: 54px; line-height: 54px; border-radius: 9px; text-align: center; }
.book-tabs .on { background: #ffeee6; color: #f95a08; font-weight: 700; }
.book-link { height: 62px; line-height: 57px; text-align: center; color: #ec6012; font-size: 30px; }
.row { height: 44px; display: flex; align-items: center; font-size: 35px; padding-left: 6px; }
.row span { width: 80px; color: #666; font-size: 34px; letter-spacing: -1.500px; }
.row b { width: 94px; text-align: right; color: #dc2a2c; letter-spacing: -.5px; }
.row u { width: 104px; height: 33px; line-height: 33px; text-align: right; position: relative; color: #222; letter-spacing: -.6px; }
.row u i { position: absolute; right: 0; top: 0; height: 33px; background: #c3e8c3; z-index: -1; }
.row s { width: 12px; height: 12px; border-radius: 50%; background: #8e8e96; margin-left: 7px; }
.row .blue { background: #2d72c4; }
.row .hot { background: #ee5a00; }
.sell { height: 440px; position: relative; z-index: 0; }
.ratio { height: 6px; margin: 10px 6px 12px; background: linear-gradient(125deg, #e5484d 0 23%, #5fb548 23%); }
.buy { height: 473px; overflow: hidden; border-bottom: 1px solid #ddd; position: relative; z-index: 0; }
.buy .row b { color: #0e980e; }
.buy .row .flat { color: #222; }
.buy .row u i { background: #fdc9cb; }
.deal-head { height: 52px; display: flex; align-items: center; gap: 9px; padding-left: 93px; font-size: 32.500px; color: #666; }
.deal { height: 46.500px; display: flex; align-items: center; font-size: 35px; padding: 0 7px 0 6px; letter-spacing: -.6px; }
.deal span { width: 88px; color: #666; letter-spacing: -2.500px; }
.deal b { width: 122px; text-align: right; }
.deal em { flex: 1; text-align: right; }

.scribble { position: absolute; left: 642px; top: -43px; z-index: 2; }

.queues { height: 207px; display: grid; grid-template-columns: 1fr 1fr; border-bottom: 1px solid #d0d0d0; overflow: hidden; font-size: 34.500px; }
.queue + .queue { border-left: 1px solid #ddd; }
.queue header { height: 55px; border-bottom: 1px solid #ddd; display: grid; grid-template-columns: 1fr 1fr 1fr; align-items: center; padding: 1px 8px 0 11px; letter-spacing: -.4px; }
.queue header span { font-size: 33px; letter-spacing: -1.500px; }
.queue header b { text-align: center; }
.queue header em { text-align: right; }
.queue + .queue header { padding-right: 6px; padding-left: 10px; }
.cells { display: grid; grid-template-columns: repeat(4, 132.500px); grid-auto-rows: 54.500px; align-items: center; text-align: right; padding: 0 0 0 3px; letter-spacing: -.4px; }

.actions { height: 125px; background: #f7faff; display: flex; color: #666; font-size: 31px; }
.index { width: 252px; display: flex; flex-direction: column; align-items: center; padding-top: 8px; color: #0e980e; }
.index strong { font-size: 38px; font-weight: 400; letter-spacing: -2.200px; height: 38px; margin-top: 11px; }
.index div { display: flex; justify-content: space-between; width: 212px; align-items: center; margin-top: 8px; margin-left: 32px; height: 36px; font-size: 34px; letter-spacing: -1.500px; }
.index div span { color: #666; font-size: 32px; letter-spacing: 0; }
.actions a { width: 207px; display: flex; flex-direction: column; align-items: center; padding-top: 9px; gap: 17px; }
.system { height: 130px; display: flex; align-items: center; padding: 0 0 6px 286px; }
.system svg:nth-child(2) { margin-left: 191px; }
.system svg:nth-child(3) { margin-left: 196px; }
```
